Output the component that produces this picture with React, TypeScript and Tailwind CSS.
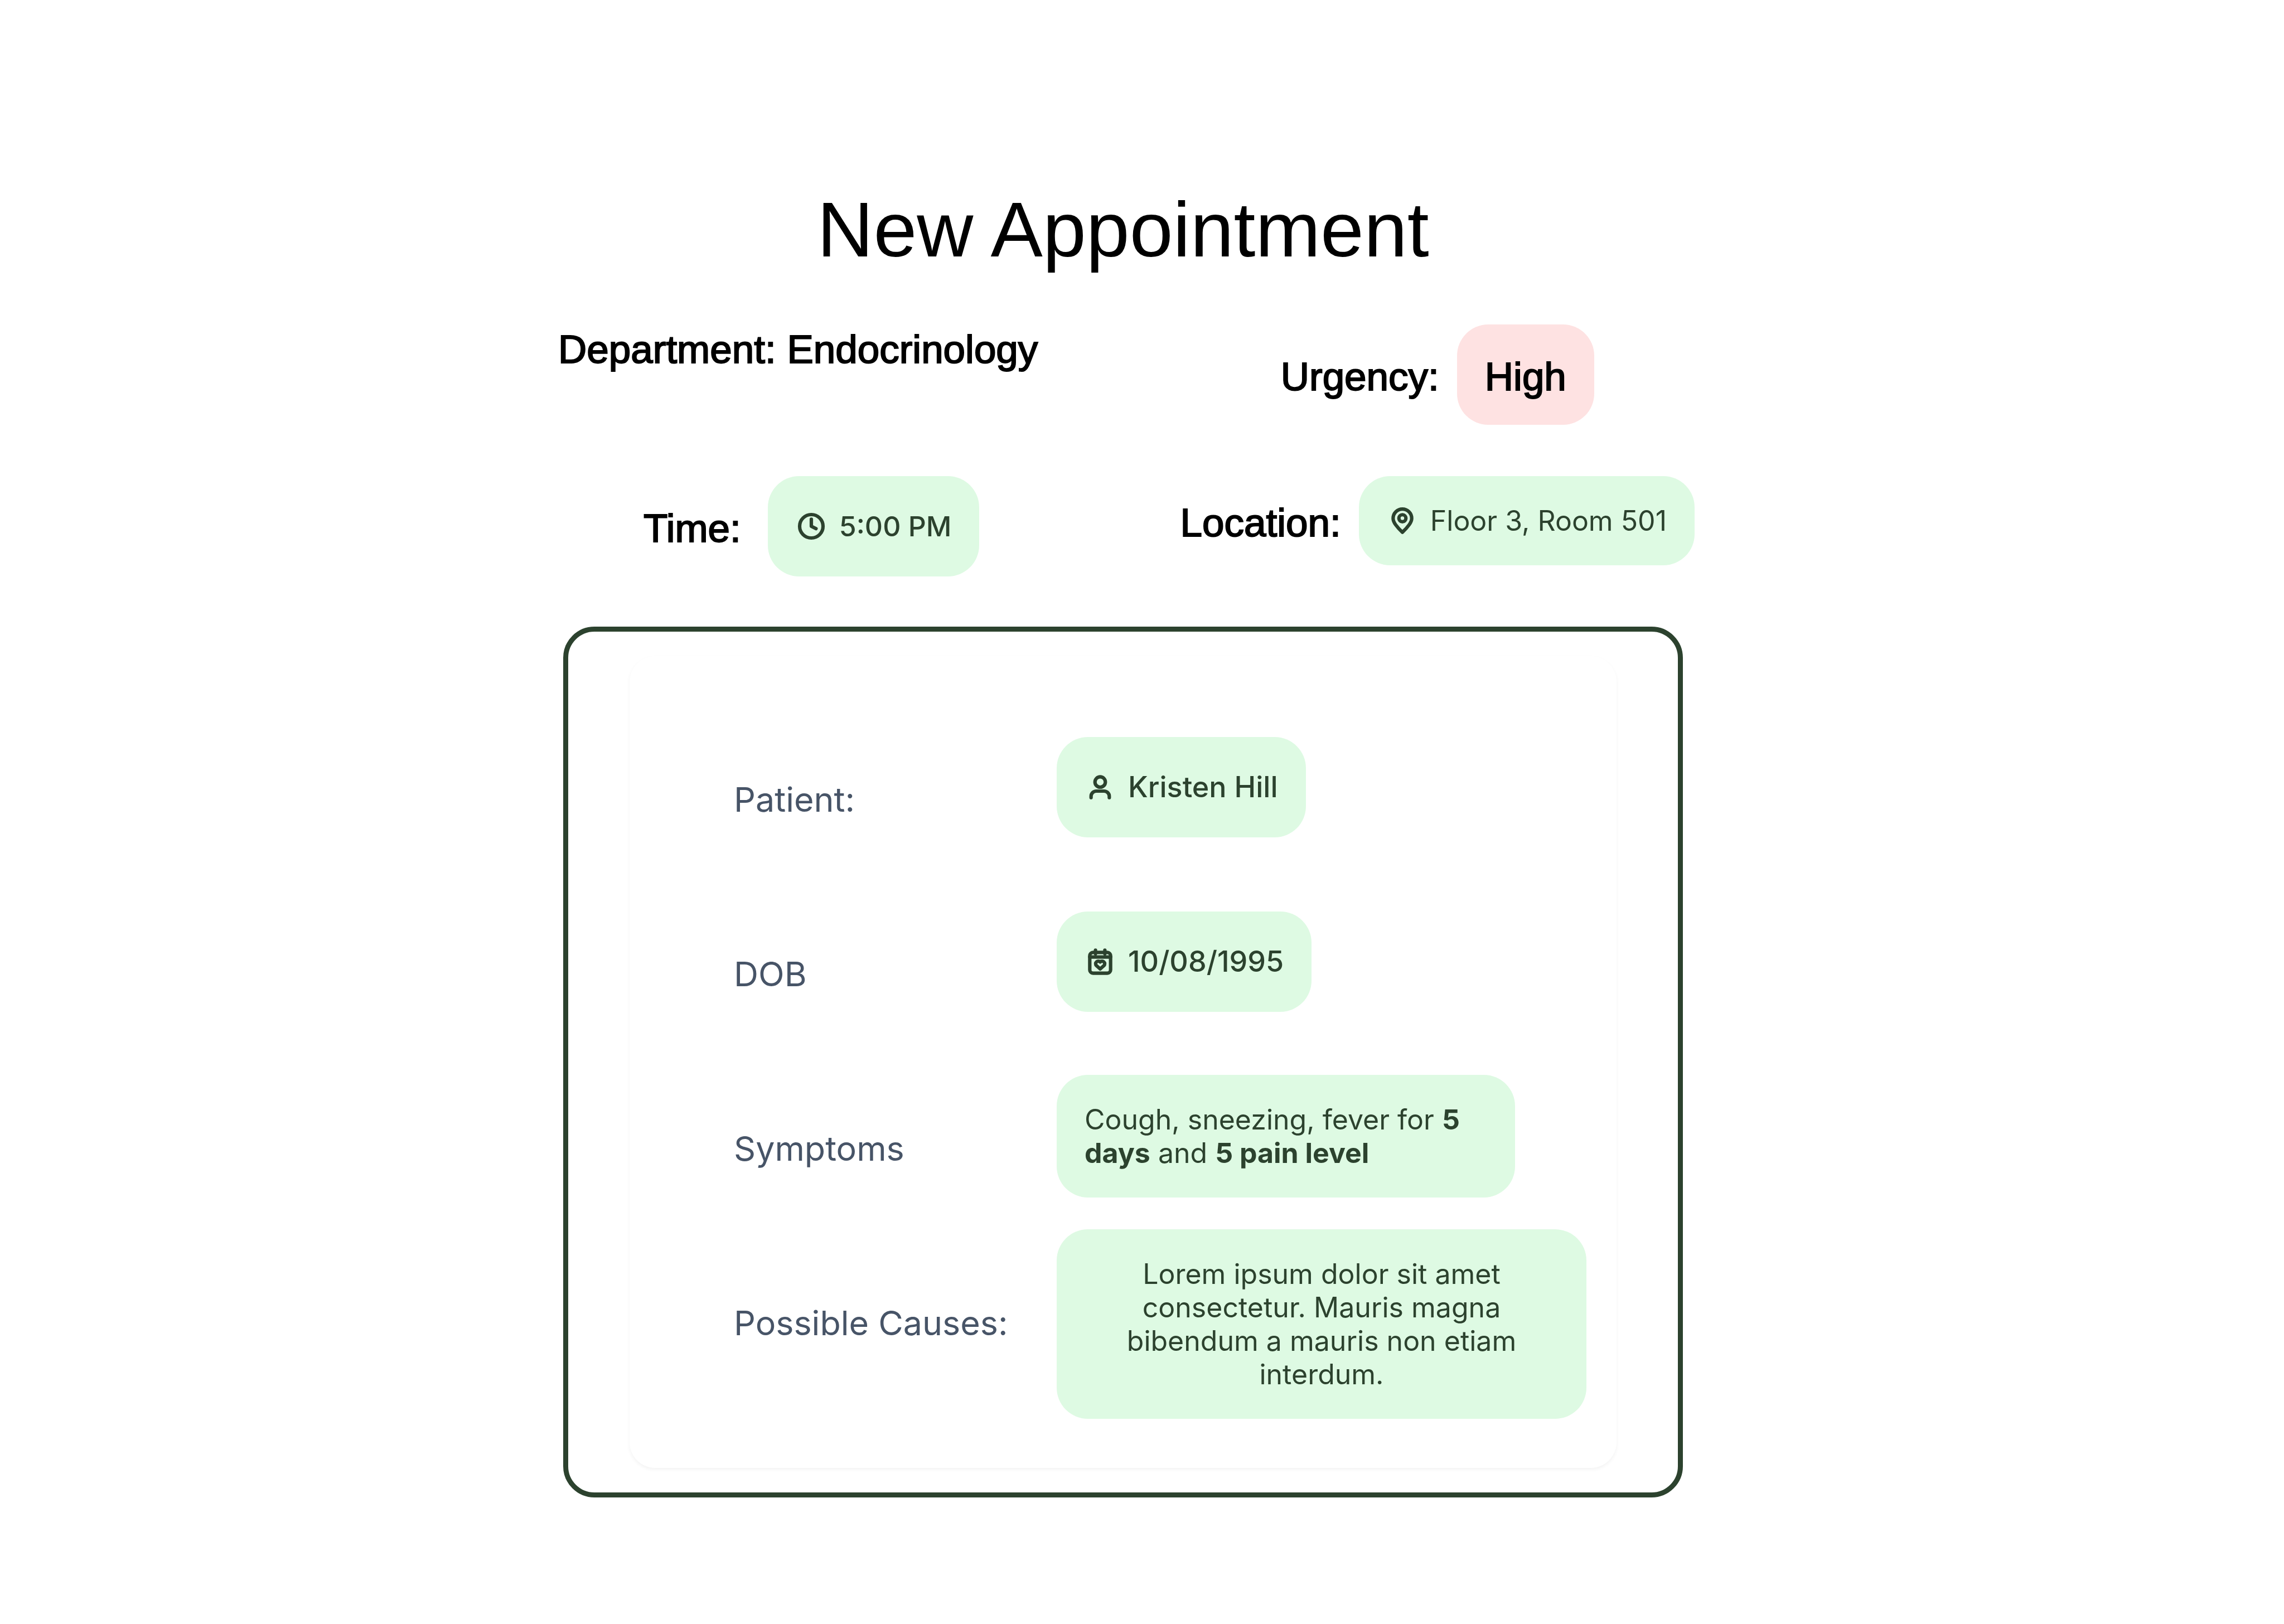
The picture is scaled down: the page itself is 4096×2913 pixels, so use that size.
import type { ReactNode } from "react";

function Icon({ children }: { children: ReactNode }) {
  return (
    <svg
      viewBox="0 0 24 24"
      className="size-14 shrink-0"
      fill="none"
      stroke="currentColor"
      strokeWidth={2.65}
      strokeLinecap="round"
      strokeLinejoin="round"
      aria-hidden="true"
    >
      {children}
    </svg>
  );
}

function ClockIcon() {
  return (
    <Icon>
      <circle cx="12" cy="12" r="9" />
      <path d="M12 6.6V12l3.6 1.8" />
    </Icon>
  );
}

function PinIcon() {
  return (
    <Icon>
      <path d="M12 20.9c-2.1-2-3.9-4-5.2-5.8-1.2-1.6-1.95-3.1-1.95-4.9a7.15 7.15 0 0 1 14.3 0c0 1.8-.75 3.3-1.95 4.9-1.3 1.8-3.1 3.8-5.2 5.8Z" />
      <circle cx="12" cy="10.1" r="2.7" />
    </Icon>
  );
}

function UserIcon() {
  return (
    <Icon>
      <circle cx="12" cy="8" r="4" />
      <path d="M5 20v-1a4 4 0 0 1 4-4h6a4 4 0 0 1 4 4v1" />
    </Icon>
  );
}

function CalendarHeartIcon() {
  return (
    <Icon>
      <rect x="4" y="4.9" width="16" height="15.9" rx="2.5" />
      <path d="M4 8.4h16M8.4 3.1v2.8M15.6 3.1v2.8" />
      <path d="M12 12.2c-.8-.8-2-.8-2.8-.1-.9.8-.9 2.1-.1 2.9l2.9 2.6 2.9-2.6c.8-.8.8-2.1-.1-2.9-.8-.7-2-.7-2.8.1Z" />
    </Icon>
  );
}

function Pill({ children, className = "text-[50px]" }: { children: ReactNode; className?: string }) {
  return (
    <div
      className={`flex w-fit items-center gap-[22px] rounded-[56px] bg-[#defae3] px-[50px] font-['Inter',sans-serif] leading-[60px] text-[#2c422e] ${className}`}
    >
      {children}
    </div>
  );
}

const heading = "text-[71px] leading-[90px] whitespace-nowrap [-webkit-text-stroke:2px_#000]";

function Row({ label, children }: { label: string; children: ReactNode }) {
  return (
    <div className="flex h-[313px] items-center">
      <dt className="w-[579px] shrink-0 pb-1 text-[61px] leading-[72px] text-[#475467]">{label}</dt>
      <dd>{children}</dd>
    </div>
  );
}

export default function App() {
  return (
    <main className="flex min-h-screen flex-col items-center gap-[90px] bg-white pt-[332px] pr-[68px] pb-[227px] font-['Liberation_Sans',Arial,sans-serif] text-black">
      <h1 className="text-[140px] leading-[160px]">New Appointment</h1>

      <section className="grid w-full max-w-[2050px] grid-cols-[auto_auto] items-start justify-between justify-items-center gap-y-[92px] pl-3">
        <h2 className={heading}>Department: Endocrinology</h2>
        <div className="flex items-center gap-8">
          <h2 className={`pt-2 ${heading}`}>Urgency:</h2>
          <div className="rounded-[56px] bg-[#fee2e2] px-[50px] pt-[49px] pb-[41px]">
            <p className={heading}>High</p>
          </div>
        </div>
        <div className="flex items-center gap-12 pl-12">
          <h2 className={`pt-2 ${heading}`}>Time:</h2>
          <Pill className="py-[60px] text-[50px] font-medium">
            <ClockIcon />
            <span>5:00 PM</span>
          </Pill>
        </div>
        <div className="flex items-center gap-8">
          <h2 className={`pt-2 ${heading}`}>Location:</h2>
          <Pill className="py-[50px] text-[50px]">
            <PinIcon />
            <span>Floor 3, Room 501</span>
          </Pill>
        </div>
      </section>

      <section className="w-full max-w-[2008px] rounded-[56px] border-9 border-[#2c422e] px-[110px] py-11 font-['Inter',sans-serif]">
        <dl className="rounded-[46px] bg-white py-[102px] pl-[187px] shadow-[0_3px_6px_rgba(0,0,0,0.05)]">
          <Row label="Patient:">
            <Pill className="mb-12 py-[60px] text-[52px] font-medium">
              <UserIcon />
              <span>Kristen Hill</span>
            </Pill>
          </Row>
          <Row label="DOB">
            <Pill className="mb-12 py-[60px] text-[52px] font-medium">
              <CalendarHeartIcon />
              <span>10/08/1995</span>
            </Pill>
          </Row>
          <Row label="Symptoms">
            <Pill className="mb-12 max-w-[822px] py-[50px] text-[50px]">
              <p>
                Cough, sneezing, fever for <strong className="font-bold">5 days</strong> and{" "}
                <strong className="font-bold">5 pain level</strong>
              </p>
            </Pill>
          </Row>
          <Row label="Possible Causes:">
            <Pill className="max-w-[950px] py-[50px] text-center text-[50px]">
              <p>
                Lorem ipsum dolor sit amet consectetur. Mauris magna bibendum a mauris non etiam
                interdum.
              </p>
            </Pill>
          </Row>
        </dl>
      </section>
    </main>
  );
}
